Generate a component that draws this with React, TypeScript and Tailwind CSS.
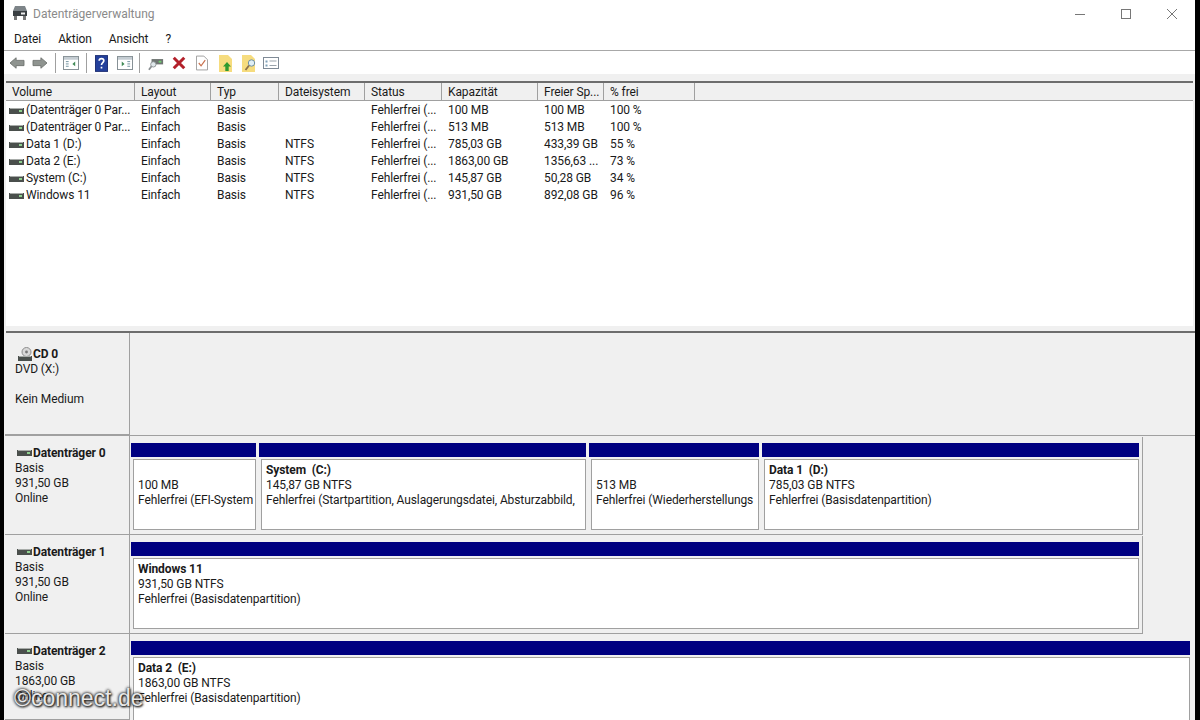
import React from 'react';

const columns = [
  { label: 'Volume', w: 'w-[129px]' },
  { label: 'Layout', w: 'w-[76px]' },
  { label: 'Typ', w: 'w-[68px]' },
  { label: 'Dateisystem', w: 'w-[86px]' },
  { label: 'Status', w: 'w-[77px]' },
  { label: 'Kapazität', w: 'w-[96px]' },
  { label: 'Freier Sp...', w: 'w-[66px]' },
  { label: '% frei', w: 'w-[91px]' },
];

const rows = [
  ['(Datenträger 0 Par...', 'Einfach', 'Basis', '', 'Fehlerfrei (...', '100 MB', '100 MB', '100 %'],
  ['(Datenträger 0 Par...', 'Einfach', 'Basis', '', 'Fehlerfrei (...', '513 MB', '513 MB', '100 %'],
  ['Data 1 (D:)', 'Einfach', 'Basis', 'NTFS', 'Fehlerfrei (...', '785,03 GB', '433,39 GB', '55 %'],
  ['Data 2 (E:)', 'Einfach', 'Basis', 'NTFS', 'Fehlerfrei (...', '1863,00 GB', '1356,63 ...', '73 %'],
  ['System (C:)', 'Einfach', 'Basis', 'NTFS', 'Fehlerfrei (...', '145,87 GB', '50,28 GB', '34 %'],
  ['Windows 11', 'Einfach', 'Basis', 'NTFS', 'Fehlerfrei (...', '931,50 GB', '892,08 GB', '96 %'],
];

const DriveIcon = () => (
  <svg width="15" height="8" viewBox="0 0 15 8" className="shrink-0">
    <rect x="0" y="1" width="15" height="6" fill="#4a4f4c" />
    <rect x="1" y="1" width="13" height="1" fill="#a8aca9" />
    <rect x="10" y="3" width="3" height="2" fill="#8fd08f" />
  </svg>
);

const CdIcon = () => (
  <svg width="16" height="15" viewBox="0 0 16 15" className="shrink-0">
    <circle cx="9.5" cy="5" r="4.5" fill="#d8d8d8" stroke="#8c8c8c" />
    <circle cx="9.5" cy="5" r="1.4" fill="#777" />
    <rect x="1" y="9" width="14" height="5" fill="#4a4f4c" />
    <rect x="2" y="9" width="12" height="1" fill="#a8aca9" />
  </svg>
);

const Sep = () => <div className="w-px h-[20px] bg-[#a0a0a0]" />;

const Toolbar = () => (
  <div className="h-[30px] shrink-0 bg-[#f0f0f0]">
    <div className="h-[23px] pt-px bg-white flex items-center pl-[5px]">
      <svg width="16" height="14" viewBox="0 0 18 16" className="mr-[7px]">
        <path d="M1 8 8 2v3h9v6H8v3z" fill="#8f9490" stroke="#6e726f" />
      </svg>
      <svg width="16" height="14" viewBox="0 0 18 16" className="mr-[7px]">
        <path d="M17 8 10 2v3H1v6h9v3z" fill="#8f9490" stroke="#6e726f" />
      </svg>
      <Sep />
      <svg width="16" height="14" viewBox="0 0 17 15" className="ml-[7px] mr-[7px]">
        <rect x="0.500" y="0.500" width="16" height="14" fill="#fff" stroke="#7f8a8f" />
        <rect x="1" y="1" width="15" height="3" fill="#c4ccd2" />
        <path d="M3 6h3M3 8.500h3M3 11h3" stroke="#6d8f9c" />
        <path d="M13 6v5l-3-2.500z" fill="#3f8a55" />
      </svg>
      <Sep />
      <svg width="13" height="17" viewBox="0 0 14 18" className="ml-[8px] mr-[9px]">
        <rect x="0.500" y="0.500" width="13" height="17" fill="#24409c" stroke="#1a2c70" />
        <path d="M4.500 6c0-3 5-3 5 0 0 2-2.500 2-2.500 4.500M7 12.500v2" stroke="#fff" strokeWidth="1.800" fill="none" />
      </svg>
      <svg width="16" height="14" viewBox="0 0 17 15" className="mr-[6px]">
        <rect x="0.500" y="0.500" width="16" height="14" fill="#fff" stroke="#7f8a8f" />
        <rect x="1" y="1" width="15" height="3" fill="#c4ccd2" />
        <path d="M11 6h3M11 8.500h3M11 11h3" stroke="#6d8f9c" />
        <path d="M5 6v5l3-2.500z" fill="#3f8a55" />
      </svg>
      <Sep />
      <svg width="16" height="15" viewBox="0 0 18 16" className="ml-[8px] mr-[8px]">
        <rect x="4" y="3" width="13" height="6" fill="#6f7572" />
        <rect x="12" y="5" width="3" height="2" fill="#6fd06f" />
        <circle cx="6" cy="9" r="3" fill="#dfe7ea" stroke="#8a8f92" />
        <path d="M4 11 1 15" stroke="#8a8f92" strokeWidth="2" />
      </svg>
      <svg width="14" height="14" viewBox="0 0 16 16" className="mr-[10px]">
        <path d="M2 2 14 14M14 2 2 14" stroke="#b3202a" strokeWidth="3.400" />
      </svg>
      <svg width="12" height="16" viewBox="0 0 13 16" className="mr-[11px]">
        <path d="M0.500 0.500h8l4 4v11h-12z" fill="#fff" stroke="#9a9a9a" />
        <path d="M3 8l2.500 3L10 5" stroke="#c8714e" strokeWidth="1.300" fill="none" />
      </svg>
      <svg width="14" height="17" viewBox="0 0 14 17" className="mr-[9px]">
        <path d="M0 0h9l4 4v13H0z" fill="#f6dc7e" />
        <path d="M8 7l4 4.500H9.700V16H6.300v-4.500H4z" fill="#2f9a2f" />
      </svg>
      <svg width="15" height="17" viewBox="0 0 15 17" className="mr-[6px]">
        <path d="M0 0h9l4 4v13H0z" fill="#f6dc7e" />
        <circle cx="9.500" cy="8" r="3.200" fill="#dfeef5" stroke="#6f8fa0" />
        <path d="M7 10.500 3.500 15" stroke="#8a6f4a" strokeWidth="1.800" />
      </svg>
      <svg width="16" height="14" viewBox="0 0 16 14">
        <rect x="0.500" y="1.500" width="15" height="11" fill="#fff" stroke="#7f8a96" />
        <path d="M2.500 4.500h2v2h-2zM2.500 8.500h2v2h-2z" fill="#7fa0b8" />
        <path d="M6.500 5h7M6.500 9.500h7" stroke="#9aa3ab" />
      </svg>
    </div>
  </div>
);

const VolumeTable = () => (
  <div className="h-[245px] shrink-0 bg-white border-t-2 border-[#6d6d6d] ml-[2px] mr-[2px]">
    <div className="flex h-[18px] bg-[#f0f0f0] border-b border-[#a0a0a0]">
      {columns.map((c) => (
        <div key={c.label} className={`${c.w} shrink-0 pl-[6px] border-r border-[#a0a0a0] leading-[18px] truncate`}>
          {c.label}
        </div>
      ))}
      <div className="flex-1" />
    </div>
    <div className="pt-px">
      {rows.map((r, i) => (
        <div key={i} className="flex h-[17px] leading-[17px] text-[#1a1a1a]">
          {r.map((cell, j) => (
            <div key={j} className={`${columns[j].w} shrink-0 whitespace-nowrap ${j === 0 ? 'pl-[3px] flex items-center gap-[2px]' : 'pl-[6px]'}`}>
              {j === 0 && <DriveIcon />}
              {cell}
            </div>
          ))}
        </div>
      ))}
    </div>
  </div>
);

const Partition = ({ w, lines, title }: { w: string; lines: string[]; title?: string }) => (
  <div className={`${w} shrink-0 overflow-hidden`}>
    <div className="h-[14px] bg-[#000080]" />
    <div className="mt-[2px] ml-[2px] h-[71px] bg-white border-t border-[#a5a29a] border-b border-b-[#a0a0a0] border-r border-r-[#a0a0a0] border-l border-l-[#a0a0a0] pl-[4px] pt-[3px] leading-[15px] whitespace-pre overflow-hidden">
      <div className="h-[15px] font-bold">{title}</div>
      {lines.map((l) => (
        <div key={l}>{l}</div>
      ))}
    </div>
  </div>
);

const DiskLabel = ({ name, info, cd }: { name: string; info: string[]; cd?: boolean }) => (
  <div className={`w-[125px] shrink-0 border-r border-b border-[#a0a0a0] pl-[10px] leading-[15px] ${cd ? 'pt-[13px]' : 'pt-[9px]'}`}>
    <div className="flex items-center h-[16px] font-bold whitespace-nowrap">
      <span className="w-[18px] flex items-center pl-[2px]">{cd ? <CdIcon /> : <DriveIcon />}</span>
      <span>{name}</span>
    </div>
    {info.map((l, i) => (
      <div key={i} className="h-[15px]">{l}</div>
    ))}
  </div>
);

export default function App() {
  return (
    <div className="relative w-[1200px] h-[720px] overflow-hidden bg-black pl-[4px] pr-[5px] text-[12px] tracking-[-0.1px] text-[#1a1a1a] font-['Roboto','Liberation_Sans',sans-serif]">
      <div className="w-[1191px] h-[720px] flex flex-col bg-[#f0f0f0]">
        {/* title bar */}
        <div className="h-[27px] bg-white flex items-center pl-[8px] shrink-0">
          <svg width="16" height="15" viewBox="0 0 16 15" className="mr-[5px]">
            <path d="M3 0h10l2 5H1z" fill="#7d8488" />
            <rect x="1" y="5" width="14" height="5" fill="#3a3f42" />
            <rect x="9" y="6.500" width="4" height="2" fill="#eee" />
            <path d="M2 10h3v4H2zM11 10h3v4h-3z" fill="#777" />
          </svg>
          <span className="text-[#8a8a8a] tracking-normal">Datenträgerverwaltung</span>
          <div className="ml-auto flex items-center">
            <svg width="12" height="12" viewBox="0 0 12 12" className="mr-[34px]"><path d="M1 6.500h10" stroke="#777" /></svg>
            <svg width="12" height="12" viewBox="0 0 12 12" className="mr-[34px]"><rect x="1.500" y="1.500" width="9" height="9" fill="none" stroke="#777" /></svg>
            <svg width="12" height="12" viewBox="0 0 12 12" className="mr-[17px]"><path d="M1 1l10 10M11 1 1 11" stroke="#777" /></svg>
          </div>
        </div>
        {/* menu */}
        <div className="h-[24px] bg-white flex items-center gap-[17px] pl-[10px] border-b border-[#a8a8a8] shrink-0">
          <span>Datei</span>
          <span>Aktion</span>
          <span>Ansicht</span>
          <span>?</span>
        </div>
        <Toolbar />
        <VolumeTable />
        {/* splitter */}
        <div className="h-[7px] bg-[#f0f0f0] border-b-2 border-[#6d6d6d] shrink-0 ml-[2px]" />
        {/* disks */}
        <div className="ml-px flex flex-col flex-1 min-h-0">
          <div className="flex h-[103px] shrink-0 border-b border-[#a0a0a0]">
            <DiskLabel cd name="CD 0" info={['DVD (X:)', '', 'Kein Medium']} />
          </div>
          <div className="flex h-[99px] shrink-0">
            <DiskLabel name="Datenträger 0" info={['Basis', '931,50 GB', 'Online']} />
            <div className="mt-px h-[98px] pt-[6px] pl-px pr-[3px] flex gap-[3px] border-r border-b border-[#a0a0a0]">
              <Partition w="w-[125px]" lines={['100 MB', 'Fehlerfrei (EFI-System']} />
              <Partition w="w-[327px]" title="System  (C:)" lines={['145,87 GB NTFS', 'Fehlerfrei (Startpartition, Auslagerungsdatei, Absturzabbild,']} />
              <Partition w="w-[170px]" lines={['513 MB', 'Fehlerfrei (Wiederherstellungs']} />
              <Partition w="w-[377px]" title="Data 1  (D:)" lines={['785,03 GB NTFS', 'Fehlerfrei (Basisdatenpartition)']} />
            </div>
          </div>
          <div className="flex h-[99px] shrink-0">
            <DiskLabel name="Datenträger 1" info={['Basis', '931,50 GB', 'Online']} />
            <div className="mt-px h-[98px] pt-[6px] pl-px pr-[3px] flex border-r border-b border-[#a0a0a0]">
              <Partition w="w-[1008px]" title="Windows 11" lines={['931,50 GB NTFS', 'Fehlerfrei (Basisdatenpartition)']} />
            </div>
          </div>
          <div className="flex flex-1 min-h-0">
            <DiskLabel name="Datenträger 2" info={['Basis', '1863,00 GB', 'Online']} />
            <div className="mt-px pt-[6px] pl-px flex">
              <Partition w="w-[1059px]" title="Data 2  (E:)" lines={['1863,00 GB NTFS', 'Fehlerfrei (Basisdatenpartition)']} />
            </div>
          </div>
        </div>
      </div>
      {/* watermark */}
      <div className="absolute left-[14px] top-[685px] text-[23px] leading-[26px] tracking-normal text-[#e8e8e8] font-['Liberation_Sans',sans-serif] [text-shadow:0_0_3px_#222,0_0_3px_#222,1px_1px_2px_#222]">
        ©connect.de
      </div>
    </div>
  );
}
